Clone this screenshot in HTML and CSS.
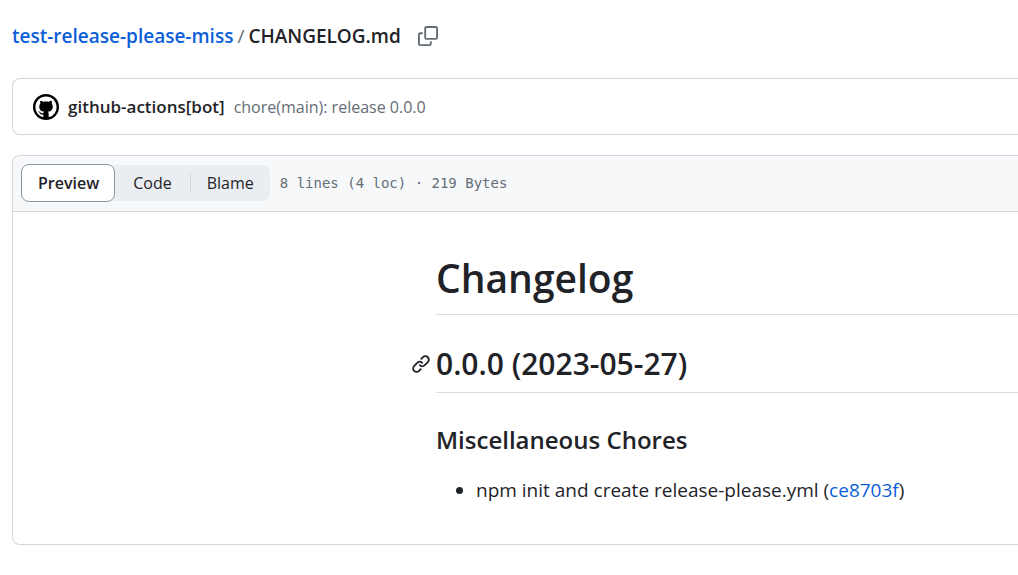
FILE: index.html
```html
<!DOCTYPE html>
<html lang="en">
<head>
<meta charset="utf-8">
<title>CHANGELOG.md</title>
<link rel="stylesheet" href="styles.css">
</head>
<body>
<main class="page">
  <header class="path">
    <a class="repo" href="#">test-release-please-miss</a>
    <span class="slash">/</span>
    <h1 class="file-name">CHANGELOG.md</h1>
    <button class="copy" type="button" aria-label="Copy path">
      <svg width="20" height="20" viewBox="0 0 16 16" fill="currentColor"><path d="M0 6.75C0 5.784.784 5 1.75 5h1.5a.75.75 0 0 1 0 1.5h-1.5a.25.25 0 0 0-.25.25v7.5c0 .138.112.25.25.25h7.5a.25.25 0 0 0 .25-.25v-1.5a.75.75 0 0 1 1.5 0v1.5A1.75 1.75 0 0 1 9.25 16h-7.5A1.75 1.75 0 0 1 0 14.25Z"/><path d="M5 1.75C5 .784 5.784 0 6.75 0h7.5C15.216 0 16 .784 16 1.75v7.5A1.75 1.75 0 0 1 14.25 11h-7.5A1.75 1.75 0 0 1 5 9.25Zm1.75-.25a.25.25 0 0 0-.25.25v7.5c0 .138.112.25.25.25h7.5a.25.25 0 0 0 .25-.25v-7.5a.25.25 0 0 0-.25-.25Z"/></svg>
    </button>
  </header>
  <section class="commit">
    <svg class="avatar" width="26" height="26" viewBox="0 0 26 26"><circle cx="13" cy="13" r="13" fill="#000"/><path fill="#fff" transform="translate(2.4 2.4) scale(1.325)" d="M8 0C3.58 0 0 3.58 0 8c0 3.54 2.29 6.53 5.47 7.59.4.07.55-.17.55-.38 0-.19-.01-.82-.01-1.49-2.01.37-2.53-.49-2.69-.94-.09-.23-.48-.94-.82-1.13-.28-.15-.68-.52-.01-.53.63-.01 1.08.58 1.23.82.72 1.21 1.87.87 2.33.66.07-.52.28-.87.51-1.07-1.78-.2-3.64-.89-3.64-3.95 0-.87.31-1.59.82-2.15-.08-.2-.36-1.02.08-2.12 0 0 .67-.21 2.2.82.64-.18 1.32-.27 2-.27s1.36.09 2 .27c1.53-1.04 2.2-.82 2.2-.82.44 1.1.16 1.92.08 2.12.51.56.82 1.27.82 2.15 0 3.07-1.87 3.75-3.65 3.95.29.25.54.73.54 1.48 0 1.07-.01 1.93-.01 2.2 0 .21.15.46.55.38A8.01 8.01 0 0 0 16 8c0-4.42-3.58-8-8-8Z"/></svg>
    <a class="author" href="#">github-actions[bot]</a>
    <a class="message" href="#">chore(main): release 0.0.0</a>
  </section>
  <section class="file">
    <div class="toolbar">
      <div class="tabs">
        <button class="tab selected" type="button">Preview</button>
        <button class="tab" type="button">Code</button>
        <button class="tab divided" type="button">Blame</button>
      </div>
      <span class="stats">8 lines (4 loc) · 219 Bytes</span>
    </div>
    <article class="markdown">
      <h1 class="title">Changelog</h1>
      <h2 class="version"><a class="anchor" href="#" aria-label="Link to 0.0.0"><svg width="20" height="20" viewBox="0 0 16 16" fill="currentColor"><path d="m7.775 3.275 1.25-1.25a3.5 3.5 0 1 1 4.95 4.95l-2.5 2.5a3.5 3.5 0 0 1-4.95 0 .751.751 0 0 1 .018-1.042.751.751 0 0 1 1.042-.018 1.998 1.998 0 0 0 2.83 0l2.5-2.5a2.002 2.002 0 0 0-2.83-2.83l-1.25 1.25a.751.751 0 0 1-1.042-.018.751.751 0 0 1-.018-1.042Zm-4.69 9.64a1.998 1.998 0 0 0 2.83 0l1.25-1.25a.751.751 0 0 1 1.042.018.751.751 0 0 1 .018 1.042l-1.25 1.25a3.5 3.5 0 1 1-4.95-4.95l2.5-2.5a3.5 3.5 0 0 1 4.95 0 .751.751 0 0 1-.018 1.042.751.751 0 0 1-1.042.018 1.998 1.998 0 0 0-2.83 0l-2.5 2.5a1.998 1.998 0 0 0 0 2.83Z"/></svg></a>0.0.0 (2023-05-27)</h2>
      <h3 class="group">Miscellaneous Chores</h3>
      <ul class="changes">
        <li>npm init and create release-please.yml (<a href="#">ce8703f</a>)</li>
      </ul>
    </article>
  </section>
</main>
</body>
</html>
```
FILE: styles.css
```css
* { box-sizing: border-box; }
body {
  margin: 0;
  background: #fff;
  color: #1f2328;
  font-family: "Segoe UI", "Open Sans", sans-serif;
  font-size: 16px;
  overflow-x: hidden;
}
a { color: #0b5fd9; text-decoration: none; }
h1, h2, h3 { margin: 0; font-weight: 600; }
button { font: inherit; color: inherit; background: none; border: 0; padding: 0; }
.page { padding: 16px 0 30px 12px; }
.path { display: flex; align-items: center; gap: 4px; height: 39px; font-size: 19px; }
.repo { font-weight: 600; }
.slash { color: #656d76; }
.file-name { font-size: 19px; }
.copy { display: flex; margin-left: 13px; color: #656d76; }
.commit, .file { border: 1px solid #d0d7de; border-right: 0; border-radius: 8px 0 0 8px; }
.commit { display: flex; align-items: center; height: 57px; margin-top: 23px; padding-left: 20px; }
.author { margin-left: 9px; color: #1f2328; font-size: 17px; font-weight: 600; }
.message { margin-left: 9px; color: #656d76; }
.file { margin-top: 20px; }
.toolbar {
  display: flex;
  align-items: center;
  gap: 10px;
  height: 56px;
  padding: 0 0 1px 8px;
  border-bottom: 1px solid #d0d7de;
  border-radius: 8px 0 0 0;
  background: #f6f8fa;
}
.tabs { display: flex; align-items: center; height: 36px; border-radius: 8px; background: #eaeef2; }
.tab { display: flex; align-items: center; height: 20px; padding: 0 18px; }
.selected { height: 38px; padding: 0 15px 0 16px; border: 1px solid #8c959f; border-radius: 8px; background: #fff; font-weight: 600; }
.divided { border-left: 1px solid #d0d7de; padding: 0 16px; }
.stats { color: #656d76; font-family: "DejaVu Sans Mono", monospace; font-size: 14px; }
.markdown { padding: 41px 0 39px 40px; margin-left: 383px; font-size: 19px; }
.title { padding-bottom: 11px; border-bottom: 1px solid #d8dee4; font-size: 39px; line-height: 50px; }
.version { display: flex; align-items: center; margin-top: 30px; padding-bottom: 9px; border-bottom: 1px solid #d8dee4; font-size: 30px; line-height: 38px; }
.anchor { display: flex; margin-left: -25px; padding-right: 5px; color: #1f2328; }
.group { margin-top: 31px; font-size: 24px; line-height: 32px; }
.changes { margin: 20px 0 0; padding-left: 40px; line-height: 29px; }
```
